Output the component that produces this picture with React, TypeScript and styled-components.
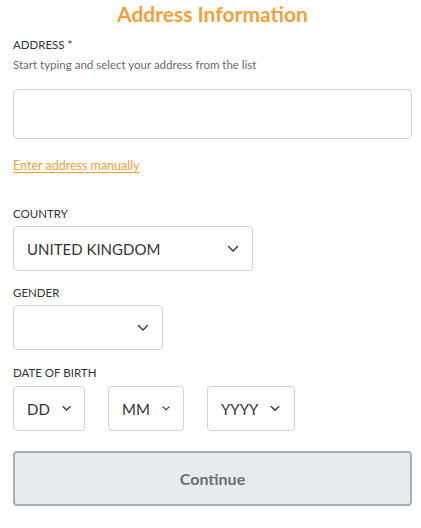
import styled, { createGlobalStyle } from 'styled-components';

const GlobalStyle = createGlobalStyle`
  html, body {
    margin: 0;
    padding: 0;
    background: #ffffff;
  }
  body {
    font-family: Lato, "Open Sans", Arial, sans-serif;
    color: #333333;
  }
`;

const Page = styled.div`
  width: 421px;
  padding: 0 9px 0 13px;
  box-sizing: border-box;
  display: flex;
  flex-direction: column;
`;

const Title = styled.h1`
  margin: 0;
  font-size: 21px;
  line-height: 28px;
  font-weight: 700;
  color: #f69f3a;
  text-align: center;
`;

const Label = styled.div<{ $top: number }>`
  margin-top: ${(p) => p.$top}px;
  font-size: 11.5px;
  line-height: 14px;
  color: #333333;
  text-transform: uppercase;
`;

const Hint = styled.div`
  margin-top: 6px;
  font-size: 11.5px;
  line-height: 14px;
  color: #6b6b6b;
`;

const TextInput = styled.div`
  margin-top: 17px;
  height: 50px;
  border: 1px solid #d2d2d2;
  border-radius: 4px;
  box-sizing: border-box;
`;

const ManualLink = styled.a`
  margin-top: 19px;
  align-self: flex-start;
  font-size: 12.5px;
  line-height: 16px;
  color: #f69f3a;
  text-decoration: underline;
  text-underline-offset: 2px;
  cursor: pointer;
`;

const Select = styled.div<{ $width: number; $spread?: boolean }>`
  width: ${(p) => p.$width}px;
  height: 45px;
  box-sizing: border-box;
  border: 1px solid #d2d2d2;
  border-radius: 4px;
  display: flex;
  align-items: center;
  justify-content: ${(p) => (p.$spread ? 'space-between' : 'flex-start')};
  gap: 12px;
  padding: 0 13px 0 13px;
  font-size: 15px;
  color: #333333;
  background: #ffffff;
`;

const Field = styled.div`
  margin-top: 5px;
`;

const DateRow = styled.div`
  margin-top: 6px;
  display: flex;
  gap: 23px;
`;

const ContinueButton = styled.button`
  margin-top: 20px;
  height: 55px;
  width: 100%;
  border: 2px solid #a9aeb3;
  border-radius: 4px;
  background: #e8ebee;
  color: #686d73;
  font-family: inherit;
  font-size: 16px;
  font-weight: 700;
  cursor: pointer;
`;

const Chevron = () => (
  <svg width="12" height="8" viewBox="0 0 12 8" fill="none">
    <path d="M1.5 1.5 L6 6 L10.5 1.5" stroke="#333" strokeWidth="1.4" strokeLinecap="round" strokeLinejoin="round" />
  </svg>
);

const SmallChevron = () => (
  <svg width="10" height="7" viewBox="0 0 10 7" fill="none">
    <path d="M1.2 1.5 L5 5.2 L8.8 1.5" stroke="#333" strokeWidth="1.4" strokeLinecap="round" strokeLinejoin="round" />
  </svg>
);

export default function App() {
  return (
    <>
      <GlobalStyle />
      <Page>
        <Title>Address Information</Title>

        <Label $top={10}>Address *</Label>
        <Hint>Start typing and select your address from the list</Hint>
        <TextInput />
        <ManualLink>Enter address manually</ManualLink>

        <Label $top={33}>Country</Label>
        <Field>
          <Select $width={240} $spread>
            <span>UNITED KINGDOM</span>
            <Chevron />
          </Select>
        </Field>

        <Label $top={15}>Gender</Label>
        <Field>
          <Select $width={150} $spread>
            <span />
            <Chevron />
          </Select>
        </Field>

        <Label $top={16}>Date of birth</Label>
        <DateRow>
          <Select $width={72}>
            <span>DD</span>
            <SmallChevron />
          </Select>
          <Select $width={76}>
            <span>MM</span>
            <SmallChevron />
          </Select>
          <Select $width={88}>
            <span>YYYY</span>
            <SmallChevron />
          </Select>
        </DateRow>

        <ContinueButton>Continue</ContinueButton>
      </Page>
    </>
  );
}
